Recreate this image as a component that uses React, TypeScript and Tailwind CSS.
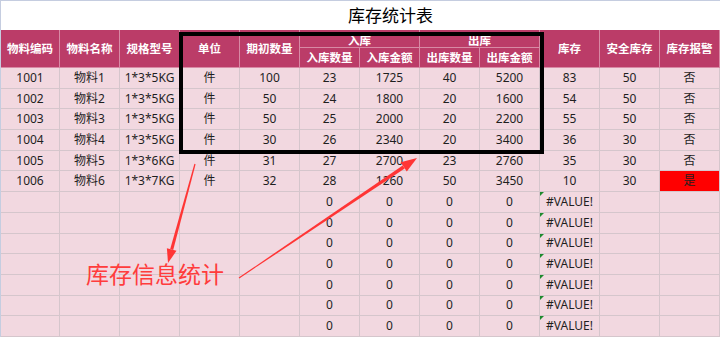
import React from "react";

const rows = [
  ["1001", "物料1", "1*3*5KG", "件", "100", "23", "1725", "40", "5200", "83", "50", "否"],
  ["1002", "物料2", "1*3*5KG", "件", "50", "24", "1800", "20", "1600", "54", "50", "否"],
  ["1003", "物料3", "1*3*5KG", "件", "50", "25", "2000", "20", "2200", "55", "50", "否"],
  ["1004", "物料4", "1*3*5KG", "件", "30", "26", "2340", "20", "3400", "36", "30", "否"],
  ["1005", "物料5", "1*3*6KG", "件", "31", "27", "2700", "23", "2760", "35", "30", "否"],
  ["1006", "物料6", "1*3*7KG", "件", "32", "28", "1260", "50", "3450", "10", "30", "是"],
];

const emptyRows = 7;

export default function App() {
  return (
    <div className="relative w-[720px] h-[337px] overflow-hidden bg-white border-t border-l border-[#c5cde0] font-['Noto_Sans','Noto_Sans_CJK_SC',sans-serif] text-[#1f1f1f]">
      {/* title */}
      <div className="h-[29px] flex items-center pl-[347px] text-[17px] leading-none text-black">
        库存统计表
      </div>

      {/* header */}
      <div className="grid grid-cols-[59px_repeat(11,60px)] grid-rows-[18px_20px] bg-[#bb3c68] text-white font-bold text-[11.5px] leading-none">
        {["物料编码", "物料名称", "规格型号", "单位", "期初数量"].map((h) => (
          <div key={h} className="row-span-2 flex items-center justify-center border-r border-b border-[#d88aa5]">
            {h}
          </div>
        ))}
        <div className="col-span-2 flex items-center justify-center pt-[4px] border-r border-b border-[#d88aa5]">入库</div>
        <div className="col-span-2 flex items-center justify-center pt-[4px] border-r border-b border-[#d88aa5]">出库</div>
        {["库存", "安全库存", "库存报警"].map((h) => (
          <div key={h} className="row-span-2 flex items-center justify-center border-r border-b border-[#d88aa5]">
            {h}
          </div>
        ))}
        {["入库数量", "入库金额", "出库数量", "出库金额"].map((h) => (
          <div key={h} className="flex items-center justify-center border-r border-b border-[#d88aa5]">
            {h}
          </div>
        ))}
      </div>

      {/* data */}
      <div className="bg-[#f2d8e0] text-[12px]">
        {rows.map((r) => (
          <div key={r[0]} className="grid grid-cols-[59px_repeat(11,60px)] h-[20.7px]">
            {r.map((c, i) => (
              <div
                key={i}
                className={`flex items-center justify-center border-r border-b border-[#d5c6cc] ${
                  i === 11 && c === "是" ? "bg-[#ff0000]" : ""
                }`}
              >
                {c}
              </div>
            ))}
          </div>
        ))}
        {Array.from({ length: emptyRows }).map((_, k) => (
          <div key={k} className="grid grid-cols-[59px_repeat(11,60px)] h-[20.7px]">
            {Array.from({ length: 12 }).map((_, i) => (
              <div
                key={i}
                className={`relative flex items-center border-r border-b border-[#d5c6cc] ${
                  i === 9 ? "justify-start pl-[6px]" : "justify-center"
                }`}
              >
                {i >= 5 && i <= 8 ? "0" : ""}
                {i === 9 && (
                  <>
                    <span className="absolute left-0 top-0 w-0 h-0 border-t-[4px] border-r-[4px] border-t-[#1e8a2e] border-r-transparent" />
                    #VALUE!
                  </>
                )}
              </div>
            ))}
          </div>
        ))}
      </div>

      {/* black highlight box */}
      <div className="absolute left-[178px] top-[31px] w-[365px] h-[122px] border-[4px] border-black pointer-events-none" />

      {/* annotation arrows */}
      <svg className="absolute left-0 top-0 pointer-events-none" width="720" height="337">
        <polygon points="194.6,163.2 193.4,162.8 169.2,248.1 172.2,248.9" fill="#ff3535" />
        <polygon points="167,262 175.5,249.8 165.9,247.2" fill="#ff3535" />
        <polygon points="238.3,277.4 237.7,276.6 401.7,164.4 403.7,167.4" fill="#ff3535" />
        <polygon points="416,157 405.8,170.5 399.6,161.3" fill="#ff3535" />
      </svg>

      <div className="absolute left-[85px] top-[262px] text-[23px] leading-none text-[#ff3c3c]">
        库存信息统计
      </div>
    </div>
  );
}
